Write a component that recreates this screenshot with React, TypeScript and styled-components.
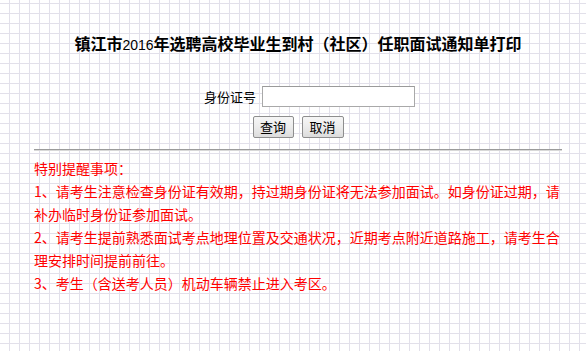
import React from "react";
import styled, { createGlobalStyle } from "styled-components";

const GlobalStyle = createGlobalStyle`
  html, body {
    margin: 0;
    padding: 0;
    min-height: 100%;
  }
  body {
    background-color: #ffffff;
    background-image:
      linear-gradient(to right, #e2e0ea 1px, transparent 1px),
      linear-gradient(to bottom, #e2e0ea 1px, transparent 1px);
    background-size: 10px 10px;
    background-position: 9px 3px;
    font-family: "Noto Sans CJK SC", "Liberation Sans", sans-serif;
    min-height: 351px;
  }
`;

const Page = styled.div`
  margin-left: 34px;
  width: 528px;
  padding-top: 33px;
`;

const Title = styled.h1`
  margin: 0;
  font-size: 16px;
  line-height: 20px;
  font-weight: bold;
  text-align: center;
  color: #000;
`;

const Year = styled.span`
  font-family: "Liberation Sans", Arial, sans-serif;
  font-weight: normal;
  font-size: 14px;
`;

const Form = styled.form`
  margin-top: 31px;
  display: flex;
  flex-direction: column;
  gap: 9px;
`;

const Row = styled.div<{ $shift?: number }>`
  display: flex;
  justify-content: center;
  align-items: center;
  gap: ${(p) => (p.$shift ? 6 : 8)}px;
  padding-left: ${(p) => p.$shift ?? 0}px;
`;

const Label = styled.label`
  font-size: 13px;
  line-height: 21px;
  color: #000;
`;

const Input = styled.input`
  box-sizing: border-box;
  width: 153px;
  height: 21px;
  margin: 0;
  padding: 1px 3px;
  border: 1px solid #a9a9a9;
  border-top-color: #9a9a9a;
  background: #fff;
  font-size: 13px;
  outline: none;
`;

const Button = styled.button<{ $w: number }>`
  box-sizing: border-box;
  width: ${(p) => p.$w}px;
  height: 22px;
  margin: 0;
  padding: 0;
  border: 1px solid #8e8e8e;
  border-radius: 2px;
  background: linear-gradient(to bottom, #f6f6f6 0%, #ececec 50%, #dcdcdc 100%);
  font-family: "Noto Sans CJK SC", sans-serif;
  font-size: 13px;
  line-height: 20px;
  color: #000;
`;

const Rule = styled.hr`
  margin: 11px 0 0;
  height: 0;
  border: 0;
  border-top: 1px solid #9b9b9b;
  border-bottom: 1px solid #d8d8d8;
`;

const Notes = styled.div`
  margin-top: 6px;
  color: #ff0000;
  font-size: 14px;
  line-height: 23px;
`;

const Note = styled.p`
  margin: 0;
`;

const notes = [
  "特别提醒事项：",
  "1、请考生注意检查身份证有效期，持过期身份证将无法参加面试。如身份证过期，请补办临时身份证参加面试。",
  "2、请考生提前熟悉面试考点地理位置及交通状况，近期考点附近道路施工，请考生合理安排时间提前前往。",
  "3、考生（含送考人员）机动车辆禁止进入考区。",
];

export default function App() {
  return (
    <>
      <GlobalStyle />
      <Page>
        <Title>
          镇江市<Year>2016</Year>年选聘高校毕业生到村（社区）任职面试通知单打印
        </Title>
        <Form onSubmit={(e) => e.preventDefault()}>
          <Row $shift={23}>
            <Label htmlFor="idcard">身份证号</Label>
            <Input id="idcard" type="text" />
          </Row>
          <Row>
            <Button type="submit" $w={41}>查询</Button>
            <Button type="reset" $w={42}>取消</Button>
          </Row>
        </Form>
        <Rule />
        <Notes>
          {notes.map((n) => (
            <Note key={n}>{n}</Note>
          ))}
        </Notes>
      </Page>
    </>
  );
}
